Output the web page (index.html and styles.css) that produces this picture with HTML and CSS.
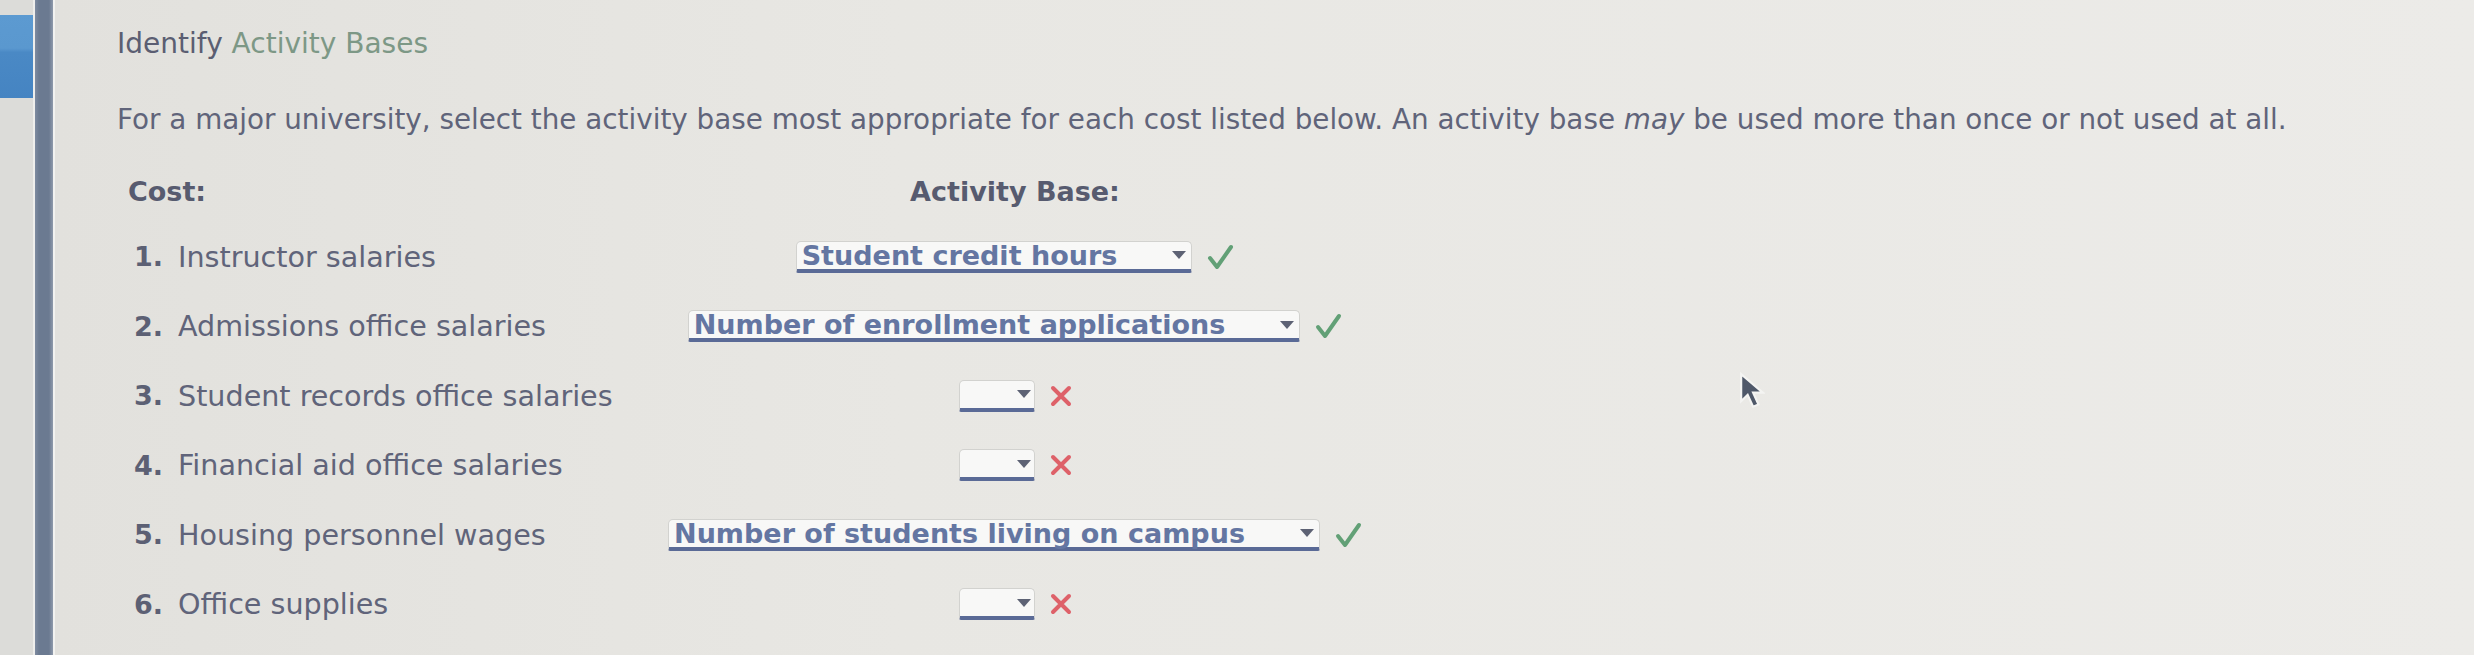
FILE: index.html
```html
<!DOCTYPE html>
<html lang="en">
  <head>
    <meta charset="UTF-8" />
    <title>Identify Activity Bases</title>
    <link rel="stylesheet" href="styles.css">
  </head>
  <body>
    <div class="screen">
      <div class="rail"><div class="rail-tab"></div></div>
      <div class="divider"></div>

      <main class="panel">
        <h1 class="title">Identify <span class="title-accent">Activity Bases</span></h1>
        <p class="intro">For a major university, select the activity base most appropriate for each cost listed below. An activity base <em>may</em> be used more than once or not used at all.</p>

        <div class="sheet">
          <div class="row row-head">
            <div class="head-cost">Cost:</div>
            <div class="head-base">Activity Base:</div>
          </div>

          <div class="row">
            <div class="num">1.</div>
            <div class="label">Instructor salaries</div>
            <div class="answer">
              <span class="pick"><span class="pick-value">Student credit hours</span><svg class="pick-caret" viewBox="0 0 14 8"><path d="M0 0h14L7 8z"/></svg></span>
              <svg class="mark mark-ok" viewBox="0 0 27 26"><path d="M3 14l7 9L24 3"/></svg>
            </div>
          </div>

          <div class="row">
            <div class="num">2.</div>
            <div class="label">Admissions office salaries</div>
            <div class="answer">
              <span class="pick"><span class="pick-value">Number of enrollment applications</span><svg class="pick-caret" viewBox="0 0 14 8"><path d="M0 0h14L7 8z"/></svg></span>
              <svg class="mark mark-ok" viewBox="0 0 27 26"><path d="M3 14l7 9L24 3"/></svg>
            </div>
          </div>

          <div class="row">
            <div class="num">3.</div>
            <div class="label">Student records office salaries</div>
            <div class="answer">
              <span class="pick pick-empty"><svg class="pick-caret" viewBox="0 0 14 8"><path d="M0 0h14L7 8z"/></svg></span>
              <svg class="mark mark-bad" viewBox="0 0 22 22"><path d="M3 3l16 16M19 3L3 19"/></svg>
            </div>
          </div>

          <div class="row">
            <div class="num">4.</div>
            <div class="label">Financial aid office salaries</div>
            <div class="answer">
              <span class="pick pick-empty"><svg class="pick-caret" viewBox="0 0 14 8"><path d="M0 0h14L7 8z"/></svg></span>
              <svg class="mark mark-bad" viewBox="0 0 22 22"><path d="M3 3l16 16M19 3L3 19"/></svg>
            </div>
          </div>

          <div class="row">
            <div class="num">5.</div>
            <div class="label">Housing personnel wages</div>
            <div class="answer">
              <span class="pick"><span class="pick-value">Number of students living on campus</span><svg class="pick-caret" viewBox="0 0 14 8"><path d="M0 0h14L7 8z"/></svg></span>
              <svg class="mark mark-ok" viewBox="0 0 27 26"><path d="M3 14l7 9L24 3"/></svg>
            </div>
          </div>

          <div class="row">
            <div class="num">6.</div>
            <div class="label">Office supplies</div>
            <div class="answer">
              <span class="pick pick-empty"><svg class="pick-caret" viewBox="0 0 14 8"><path d="M0 0h14L7 8z"/></svg></span>
              <svg class="mark mark-bad" viewBox="0 0 22 22"><path d="M3 3l16 16M19 3L3 19"/></svg>
            </div>
          </div>
        </div>

        <svg class="pointer" viewBox="0 0 24 36"><path d="M2 2v25l6-6 5 11 5-2-5-11h9z"/></svg>
      </main>
    </div>
  </body>
</html>
```

FILE: styles.css
```css
body {
  margin: 0;
  font-family: "DejaVu Sans", Verdana, sans-serif;
  color: #60647a;
}

.screen {
  display: flex;
  height: 655px;
  overflow: hidden;
}

.rail {
  width: 35px;
  background: #dcdcd9;
  padding-top: 15px;
  box-sizing: border-box;
  border-right: 2px solid #eeeeec;
}

.rail-tab {
  height: 83px;
  background: linear-gradient(180deg, #5c9ad1 0, #5a98cf 40%, #4a89c5 45%, #4584c2 100%);
}

.divider {
  width: 18px;
  background: linear-gradient(90deg, #7e8ba0 0, #6b7a91 4px, #6b7a91 14px, #8f9aab 18px);
}

.panel {
  position: relative;
  flex: 1;
  height: 647px;
  border-bottom: 8px solid #b5bcc1;
  padding: 27px 0 0 62px;
  box-sizing: content-box;
  background: linear-gradient(90deg, #e2e1dd 0%, #e8e7e3 35%, #ecebe8 100%);
  border-left: 2px solid #f2f2f0;
}

.title {
  margin: 0;
  font-size: 28px;
  line-height: 34px;
  font-weight: normal;
  color: #5b5e72;
}

.title-accent {
  color: #7d9886;
}

.intro {
  margin: 44px 0 0;
  font-size: 27.8px;
  line-height: 30px;
}

.sheet {
  margin: 25px 0 0 11px;
}

.row {
  display: grid;
  grid-template-columns: 50px 482px 710px;
  align-items: center;
  height: 69.5px;
}

.row-head {
  height: 62px;
  font-size: 27px;
  font-weight: bold;
  color: #575b6f;
}

.head-cost {
  grid-column: 1 / 3;
}

.head-base {
  grid-column: 3;
  text-align: center;
}

.num {
  padding-left: 6px;
  font-size: 27px;
  font-weight: bold;
  color: #5c6074;
}

.label {
  font-size: 28.6px;
}

.answer {
  display: flex;
  justify-content: center;
  align-items: center;
  gap: 15px;
}

.pick {
  display: inline-flex;
  align-items: center;
  height: 32px;
  box-sizing: border-box;
  padding: 0 5px 0 5px;
  background: #f8f8f7;
  border: 1px solid #d2d2cf;
  border-bottom: 4px solid #5a6a96;
  border-radius: 5px 5px 2px 2px;
}

.pick-value {
  margin-right: 55px;
  font-size: 27px;
  line-height: 27px;
  font-weight: bold;
  color: #6476a2;
}

.pick-empty {
  width: 76px;
  justify-content: flex-end;
  padding-right: 3px;
}

.pick-caret {
  width: 14px;
  height: 8px;
  fill: #5d6274;
}

.mark {
  fill: none;
  stroke-width: 4;
  stroke-linecap: round;
  stroke-linejoin: round;
}

.mark-ok {
  width: 27px;
  height: 26px;
  stroke: #62a076;
}

.mark-bad {
  width: 22px;
  height: 22px;
  stroke: #de6169;
}

.pointer {
  position: absolute;
  left: 1684px;
  top: 372px;
  width: 26px;
  height: 39px;
  fill: #4f5869;
  stroke: #f4f4f2;
  stroke-width: 2;
}
```
